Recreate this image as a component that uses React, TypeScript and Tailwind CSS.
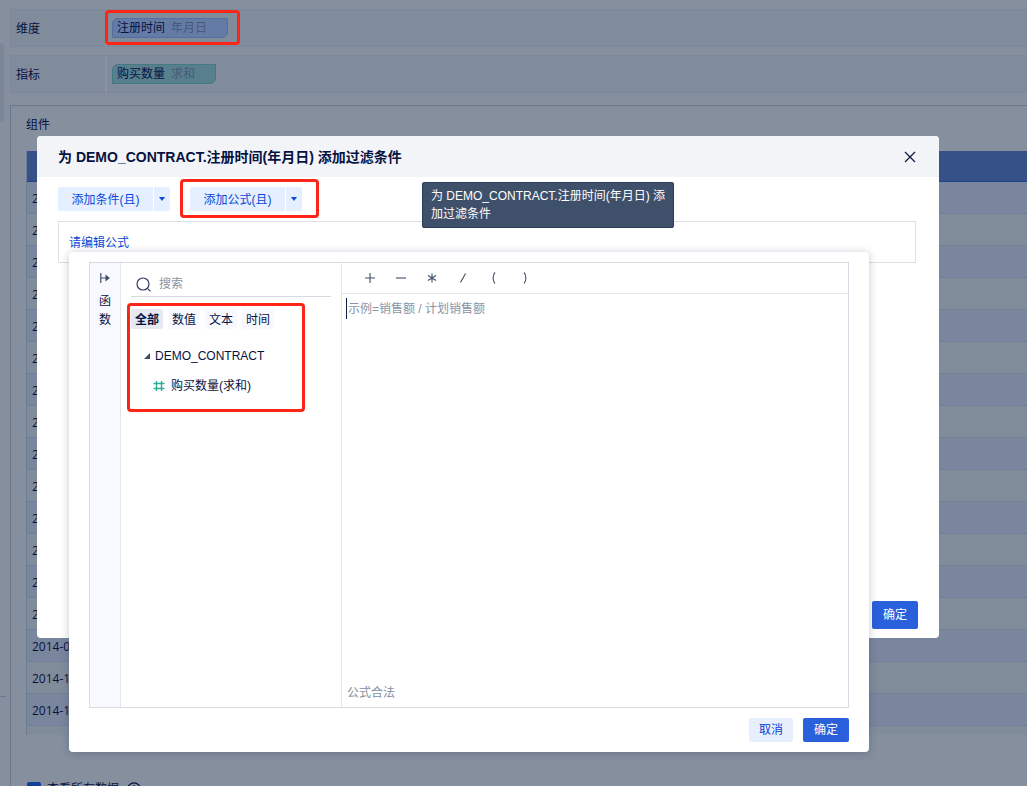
import type { ReactNode } from "react";

const dates = [
  "2013-05", "2013-06", "2013-07", "2013-08", "2013-09", "2013-10",
  "2013-11", "2013-12", "2014-01", "2014-03", "2014-04", "2014-05",
  "2014-06", "2014-07", "2014-09", "2014-10", "2014-11",
];

const operators = [
  { name: "加", path: "M1 6h10M6 1v10" },
  { name: "减", path: "M1 6h10" },
  { name: "乘", path: "M6 1.5v9M2 3.5l8 5M10 3.5l-8 5" },
  { name: "除", path: "M8.5 1.5l-5 9" },
  { name: "左括号", path: "M7 .5C4.5 3 4.5 9 7 11.500" },
  { name: "右括号", path: "M5 .5C7.500 3 7.500 9 5 11.500" },
];

const tabs = ["全部", "数值", "文本", "时间"];

function Highlight({ className }: { className: string }) {
  return (
    <div
      className={`pointer-events-none absolute rounded-[4px] border-3 border-[#fd2418] ${className}`}
    />
  );
}

function FieldRow({ label, children }: { label: string; children: ReactNode }) {
  return (
    <div className="flex h-[38px] border-y border-[#7c889b] bg-[#808b9c]">
      <div className="flex w-[95px] items-center border-l border-[#7c889b] pt-[2px] pl-[5px]">{label}</div>
      <div className="flex flex-1 items-center border-l-2 border-[#8a94a4] pl-[5px]">{children}</div>
    </div>
  );
}

function SplitButton({ children }: { children: ReactNode }) {
  return (
    <div className="flex gap-px text-[#0a49d6]">
      <button className="h-6 w-[95px] rounded-l-xs bg-[#e5efff] pt-[2px]">{children}</button>
      <button
        aria-label="更多"
        className="flex h-6 w-4 items-center justify-center rounded-r-xs bg-[#e5efff]"
      >
        <svg width="6" height="4" viewBox="0 0 6 4" fill="currentColor">
          <path d="M0 0h6L3 4z" />
        </svg>
      </button>
    </div>
  );
}

function FormulaPopup() {
  return (
    <section
      aria-label="公式编辑"
      className="absolute top-[116px] left-8 w-[800px] rounded-[4px] bg-white px-5 pt-[10px] pb-[10px] shadow-[0_1px_8px_rgba(20,40,70,0.25)]"
    >
      <div className="flex h-[446px] border border-[#d8dbe4]">
        <div className="flex w-[31px] flex-col items-center border-r border-[#e3e6ef] bg-[#f7f9fe] pt-[10px]">
          <button aria-label="展开函数">
            <svg width="10" height="10" viewBox="0 0 10 10" fill="none" stroke="#3d4d66" strokeWidth="1.200">
              <path d="M.8 0v10M1 5h6" />
              <path d="M5.500 1.500l4.300 3.500-4.300 3.500z" fill="#3d4d66" stroke="none" />
            </svg>
          </button>
          <div className="mt-[9px] w-3 leading-[19px]">函数</div>
        </div>

        <div className="w-[220px] px-[10px]">
          <label className="flex h-[34px] items-center gap-[8px] border-b border-[#d5d9e1] pt-[10px] pl-[5px]">
            <svg className="shrink-0" width="15" height="15" viewBox="0 0 15 15" fill="none" stroke="#2d3b58" strokeWidth="1.200">
              <circle cx="7" cy="7" r="6" />
              <path d="M11.400 11.400l3 3" />
            </svg>
            <input
              aria-label="搜索"
              placeholder="搜索"
              className="w-full pb-[2px] outline-none placeholder:text-[#8a94a3]"
            />
          </label>
          <div className="relative">
            <div className="flex gap-[5px] pt-3">
              {tabs.map((tab, i) => (
                <button
                  key={tab}
                  className={
                    i === 0
                      ? "h-5 w-8 rounded-xs bg-[#e6e9f0] pt-[2px] font-bold"
                      : "h-5 w-8 rounded-xs bg-[#f7f9fe] pt-[2px]"
                  }
                >
                  {tab}
                </button>
              ))}
            </div>
            <div className="mt-[12px] flex h-[30px] items-center gap-[5px] pl-[13px]">
              <svg width="6" height="6" viewBox="0 0 6 6" fill="#3c4d66">
                <path d="M6 0v6H0z" />
              </svg>
              DEMO_CONTRACT
            </div>
            <div className="flex h-[30px] items-center gap-[6px] pl-[22px]">
              <svg width="12" height="12" viewBox="0 0 12 12" fill="none" stroke="#2fae9a" strokeWidth="1.400">
                <path d="M3.500 1v10M8.500 1v10M.5 3.500h11M.5 8.500h11" />
              </svg>
              购买数量(求和)
            </div>
            <Highlight className="top-[6px] left-[-4px] h-[109px] w-[178px]" />
          </div>
        </div>

        <div className="flex flex-1 flex-col border-l border-[#e3e6ef]">
          <div className="flex h-[31px] items-center gap-[19px] border-b border-[#e3e6ef] pl-[22px]">
            {operators.map((op) => (
              <button key={op.name} aria-label={op.name}>
                <svg width="12" height="12" viewBox="0 0 12 12" fill="none" stroke="#3f4e6a" strokeWidth="1.100">
                  <path d={op.path} />
                </svg>
              </button>
            ))}
          </div>
          <div className="flex flex-1 pt-1 pl-1">
            <span className="h-[21px] w-px bg-[#0b1f45]" />
            <textarea
              aria-label="公式"
              placeholder="示例=销售额 / 计划销售额"
              className="h-full flex-1 resize-none pt-[2px] pl-px leading-[18px] outline-none placeholder:text-[#8a94a3]"
            />
          </div>
          <div className="flex h-[30px] items-center pt-[2px] pl-[5px] text-[#858f9e]">公式合法</div>
        </div>
      </div>
      <div className="mt-[10px] flex justify-end gap-[10px]">
        <button className="h-6 w-11 rounded-xs bg-[#e8effc] text-[#0a3fd0]">取消</button>
        <button className="h-6 w-[46px] rounded-xs bg-[#2a60dc] text-white">确定</button>
      </div>
    </section>
  );
}

function FilterDialog() {
  return (
    <div
      role="dialog"
      aria-labelledby="filter-title"
      className="absolute top-[136px] right-[88px] left-[37px] flex min-h-[502px] flex-col rounded-[4px] bg-white"
    >
      <header className="flex h-[41px] items-center justify-between rounded-t-[4px] bg-[#f2f4f8] pr-[23px] pl-[21px]">
        <h1 id="filter-title" className="text-sm font-bold">
          为 DEMO_CONTRACT.注册时间(年月日) 添加过滤条件
        </h1>
        <button aria-label="关闭">
          <svg width="12" height="12" viewBox="0 0 12 12" fill="none" stroke="#101a45" strokeWidth="1.300">
            <path d="M1 1l10 10M11 1L1 11" />
          </svg>
        </button>
      </header>
      <div className="flex-1 px-[21px] pt-[10px]">
        <div className="flex gap-5">
          <SplitButton>添加条件(且)</SplitButton>
          <div className="relative">
            <SplitButton>添加公式(且)</SplitButton>
            <Highlight className="top-[-8px] left-[-10px] h-[39px] w-[139px]" />
          </div>
        </div>
        <div className="mt-[10px] mr-[2px] flex h-[42px] items-center border border-[#dcdfe6] pt-[2px] pl-[10px]">
          <a href="#formula" className="text-[#0a49d6]">
            请编辑公式
          </a>
        </div>
      </div>
      <footer className="flex justify-end pr-[21px] pb-[9px]">
        <button className="h-7 w-[46px] rounded-xs bg-[#2a60dc] text-white">确定</button>
      </footer>
      <div
        role="tooltip"
        className="absolute top-[46px] left-[385px] w-[252px] rounded-xs border border-[#2c3c56] bg-[#3f506b] px-2 py-[4px] leading-[18px] text-white"
      >
        为 DEMO_CONTRACT.注册时间(年月日) 添加过滤条件
      </div>
      <FormulaPopup />
    </div>
  );
}

export default function App() {
  return (
    <div className="relative flex h-screen overflow-hidden bg-[#858f9e] font-['Liberation_Sans','Noto_Sans_CJK_SC',sans-serif] text-xs text-[#07123f]">
      <aside className="flex w-[10px] shrink-0 flex-col pt-[43px]">
        <div className="h-[79px] w-1 rounded-r-[3px] bg-[#7b8698]" />
        <div className="mt-[574px] h-px w-[6px] bg-[#6b7a91]" />
      </aside>
      <main className="min-w-0 flex-1 pt-[9px]">
        <FieldRow label="维度">
          <div className="relative">
            <div className="flex h-5 w-[116px] items-center gap-[6px] rounded-tl-[6px] rounded-br-[6px] border border-[#516f9f] bg-[#637ba5] pl-1">
              <span>注册时间</span>
              <span className="text-[#485978]">年月日</span>
            </div>
            <Highlight className="top-[-8px] left-[-7px] h-[35px] w-[135px]" />
          </div>
        </FieldRow>
        <div className="h-2" />
        <FieldRow label="指标">
          <div className="flex h-5 w-[104px] items-center gap-[6px] rounded-tl-[6px] rounded-br-[6px] border border-[#437981] bg-[#577f8e] pl-1">
            <span>购买数量</span>
            <span className="text-[#485978]">求和</span>
          </div>
        </FieldRow>
        <section className="mt-3 border-t border-l border-[#68798f] pl-[15px]">
          <h2 className="flex h-[45px] items-center pb-[8px]">组件</h2>
          <div className="h-[584px] overflow-hidden border-l border-[#6d7d96]">
            <table className="w-full border-collapse text-left font-['Open_Sans','Noto_Sans_CJK_SC',sans-serif]">
              <thead>
                <tr className="h-[30px] border-b border-[#1f458a] bg-[#365187]">
                  <th aria-label="注册时间" />
                </tr>
              </thead>
              <tbody>
                {dates.map((date) => (
                  <tr
                    key={date}
                    className="h-8 border-b border-[#71809a] odd:bg-[#7a869e] even:bg-[#818c9b]"
                  >
                    <td className="pt-1 pb-0 pl-[5px]">{date}</td>
                  </tr>
                ))}
                <tr className="h-8 bg-[#818c9b]">
                  <td />
                </tr>
              </tbody>
            </table>
          </div>
          <div className="mt-[46px] flex items-center pl-px">
            <label className="flex items-center gap-[6px]">
              <span className="grid size-[14px] place-items-center">
                <input
                  type="checkbox"
                  defaultChecked
                  className="col-start-1 row-start-1 size-[14px] appearance-none rounded-xs bg-[#143f9c]"
                />
                <svg
                  className="pointer-events-none col-start-1 row-start-1"
                  width="10"
                  height="10"
                  viewBox="0 0 10 10"
                  fill="none"
                  stroke="#858f9e"
                  strokeWidth="1.500"
                >
                  <path d="M1 5l3 3 5-6" />
                </svg>
              </span>
              查看所有数据
            </label>
            <svg className="ml-2" width="14" height="14" viewBox="0 0 14 14" fill="none" stroke="#07123f" strokeWidth="1.200">
              <circle cx="7" cy="7" r="6.200" />
              <path d="M7 3v1.500M7 6v5" />
            </svg>
          </div>
        </section>
      </main>
      <FilterDialog />
    </div>
  );
}
